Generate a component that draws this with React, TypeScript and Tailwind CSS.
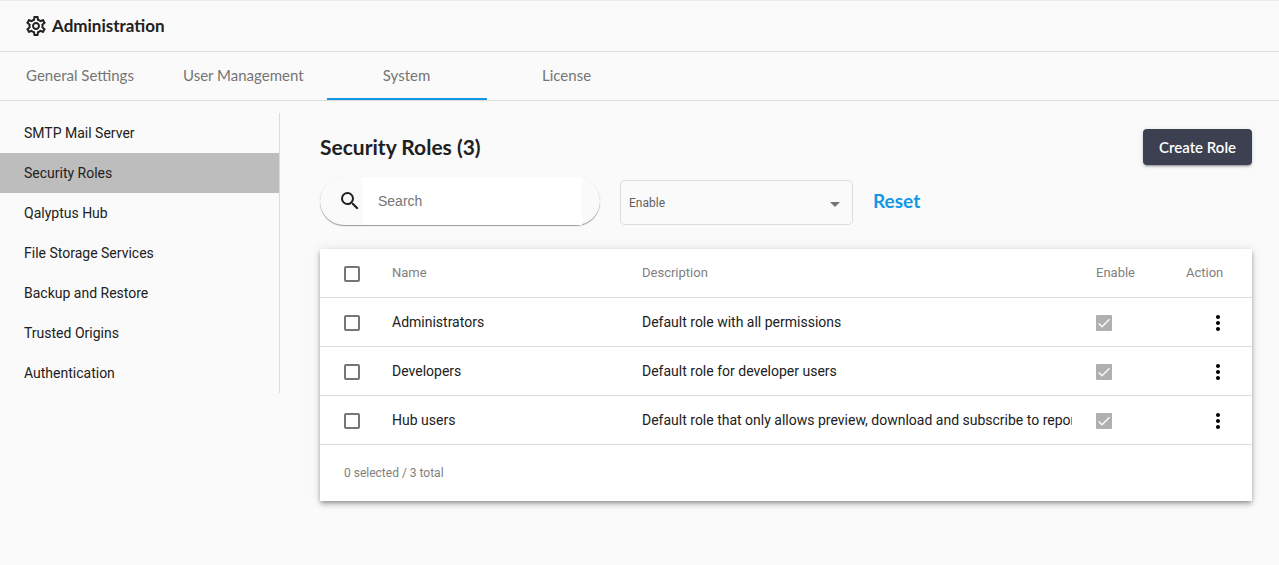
import { useState } from "react";
import { MdMoreVert, MdOutlineSettings, MdSearch } from "react-icons/md";

const tabs = ["General Settings", "User Management", "System", "License"];

const sections = [
  "SMTP Mail Server",
  "Security Roles",
  "Qalyptus Hub",
  "File Storage Services",
  "Backup and Restore",
  "Trusted Origins",
  "Authentication",
];

const roles = [
  { name: "Administrators", description: "Default role with all permissions" },
  { name: "Developers", description: "Default role for developer users" },
  {
    name: "Hub users",
    description: "Default role that only allows preview, download and subscribe to reports",
  },
];

function Checkbox({
  label,
  checked,
  disabled,
  onChange,
}: {
  label: string;
  checked: boolean;
  disabled?: boolean;
  onChange?: () => void;
}) {
  return (
    <label className="relative mt-0.5 block size-4">
      <input
        type="checkbox"
        aria-label={label}
        checked={checked}
        disabled={disabled}
        onChange={onChange}
        className="block size-4 appearance-none rounded-xs border-2 border-[#757575] checked:border-[#039be5] checked:bg-[#039be5] disabled:rounded-[1px] disabled:border-[#b0b0b0] disabled:bg-[#b0b0b0]"
      />
      {checked && (
        <svg viewBox="0 0 24 24" className="pointer-events-none absolute inset-0 size-4" aria-hidden="true">
          <path d="M4.1 12.7 9 17.6 20.3 6.3" fill="none" stroke="#fafafa" strokeWidth="2.2" />
        </svg>
      )}
    </label>
  );
}

export default function App() {
  const [selected, setSelected] = useState<string[]>([]);
  const allSelected = selected.length === roles.length;

  const toggle = (name: string) =>
    setSelected(selected.includes(name) ? selected.filter((n) => n !== name) : [...selected, name]);

  return (
    <div className="min-h-screen bg-[#fafafa] font-[Roboto,sans-serif] text-[14px] text-[#212121]">
      <header className="flex h-13 items-center gap-1 border-t border-b border-t-[#ececec] border-b-[#dcdcdc] px-6">
        <MdOutlineSettings className="size-6" aria-hidden="true" />
        <h1 className="font-[Lato,sans-serif] text-[17px] leading-6 font-bold">Administration</h1>
      </header>

      <nav aria-label="Administration" className="flex border-b border-[#dcdcdc]">
        {tabs.map((tab) => (
          <a
            key={tab}
            href="#"
            aria-current={tab === "System" ? "page" : undefined}
            className="flex h-12 min-w-40 items-center justify-center border-b-2 border-transparent px-[23px] font-[Lato,sans-serif] text-[15px] text-[#757575] aria-[current=page]:border-[#1198e6]"
          >
            {tab}
          </a>
        ))}
      </nav>

      <div className="flex items-start pt-3">
        <nav aria-label="System" className="w-70 shrink-0 border-r border-[#dcdcdc]">
          {sections.map((section) => (
            <a
              key={section}
              href="#"
              aria-current={section === "Security Roles" ? "page" : undefined}
              className="flex h-10 items-center px-6 aria-[current=page]:bg-[#bdbdbd]"
            >
              {section}
            </a>
          ))}
        </nav>

        <main className="min-w-0 flex-1 pt-4 pr-[27px] pb-8 pl-10">
          <div className="flex items-center justify-between">
            <h2 className="font-[Lato,sans-serif] text-[21px] leading-9 font-bold">Security Roles (3)</h2>
            <button
              type="button"
              className="h-9 rounded bg-[#3d4051] px-4 font-[Lato,sans-serif] text-[15px] font-semibold text-white shadow-[0_3px_1px_-2px_rgba(0,0,0,0.2),0_2px_2px_0_rgba(0,0,0,0.14),0_1px_5px_0_rgba(0,0,0,0.12)]"
            >
              Create Role
            </button>
          </div>

          <div className="mt-3 flex items-end gap-5">
            <label className="flex h-12 w-70 items-center rounded-full pr-[18px] pl-[18px] shadow-[0_1px_1px_0_rgba(0,0,0,0.4),0_0_1px_0_rgba(0,0,0,0.06)]">
              <MdSearch className="size-6 shrink-0" aria-hidden="true" />
              <input
                type="search"
                aria-label="Search"
                placeholder="Search"
                className="h-12 min-w-0 flex-1 bg-white px-4 font-['Liberation_Sans',sans-serif] outline-none placeholder:text-[#757575]"
              />
            </label>
            <div className="relative w-[233px]">
              <select
                aria-label="Enable"
                className="block h-[45px] w-full appearance-none rounded-[5px] border border-[#dcdcdc] px-2 text-[12px] text-[#616161]"
              >
                <option>Enable</option>
                <option>Yes</option>
                <option>No</option>
              </select>
              <svg
                viewBox="0 0 10 5"
                className="pointer-events-none absolute top-[22px] right-[13px] h-[5px] w-2.5 fill-[#757575]"
                aria-hidden="true"
              >
                <path d="M0 0h10L5 5z" />
              </svg>
            </div>
            <button type="button" className="h-12 font-[Lato,sans-serif] text-[19px] font-bold text-[#1198e6]">
              Reset
            </button>
          </div>

          <section className="mt-6 bg-white shadow-[0_2px_4px_-1px_rgba(0,0,0,0.3),0_4px_5px_0_rgba(0,0,0,0.14),0_1px_10px_0_rgba(0,0,0,0.12)]">
            <table className="w-full table-fixed border-separate border-spacing-0 text-left">
              <colgroup>
                <col className="w-18" />
                <col className="w-[250px]" />
                <col />
                <col className="w-[90px]" />
                <col className="w-[66px]" />
              </colgroup>
              <thead className="text-[13px] text-[#808080] [&_th]:h-[49px] [&_th]:border-b [&_th]:border-[#dcdcdc] [&_th]:p-0 [&_th]:font-normal">
                <tr>
                  <th>
                    <div className="pl-6">
                      <Checkbox
                        label="Select all roles"
                        checked={allSelected}
                        onChange={() => setSelected(allSelected ? [] : roles.map((r) => r.name))}
                      />
                    </div>
                  </th>
                  <th>Name</th>
                  <th>Description</th>
                  <th>Enable</th>
                  <th>Action</th>
                </tr>
              </thead>
              <tbody className="[&_td]:h-[49px] [&_td]:border-b [&_td]:border-[#dcdcdc] [&_td]:p-0">
                {roles.map((role) => (
                  <tr key={role.name}>
                    <td>
                      <div className="pl-6">
                        <Checkbox
                          label={`Select ${role.name}`}
                          checked={selected.includes(role.name)}
                          onChange={() => toggle(role.name)}
                        />
                      </div>
                    </td>
                    <td>{role.name}</td>
                    <td>
                      <div className="mr-6 overflow-hidden whitespace-nowrap">{role.description}</div>
                    </td>
                    <td>
                      <Checkbox label={`${role.name} enabled`} checked disabled />
                    </td>
                    <td>
                      <button type="button" aria-label={`Actions for ${role.name}`} className="mt-0.5 ml-5 block text-black">
                        <MdMoreVert className="size-6" />
                      </button>
                    </td>
                  </tr>
                ))}
              </tbody>
            </table>
            <p className="flex h-14 items-center px-6 text-[12px] text-[#808080]">
              {selected.length} selected / {roles.length} total
            </p>
          </section>
        </main>
      </div>
    </div>
  );
}
